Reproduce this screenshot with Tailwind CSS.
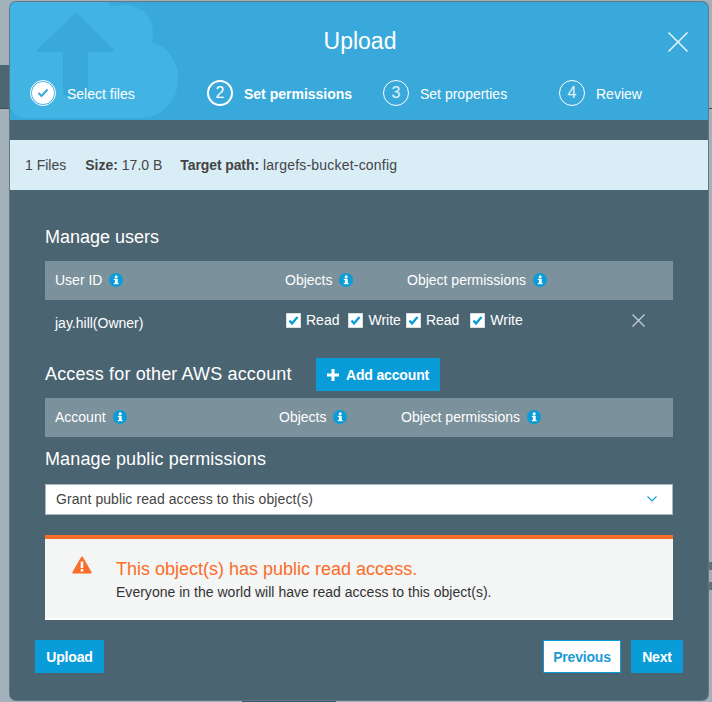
<!DOCTYPE html>
<html lang="en">
<head>
    <meta charset="UTF-8">
    <title>Upload</title>
    <script src="https://cdn.jsdelivr.net/npm/@tailwindcss/browser@4"></script>
</head>
<body class="bg-[#a3b2ba] font-['Liberation_Sans',sans-serif] overflow-hidden">
<div class="relative w-[712px] h-[702px] overflow-hidden pt-[2px]">
    <!-- Page behind the modal -->
    <div class="absolute left-0 top-[65px] w-[10px] h-[43px] bg-[#4d6673]"></div>
    <div class="absolute left-0 top-[108px] w-full h-px bg-[#3c4d57]"></div>
    <div class="absolute left-[708px] top-[562px] w-[4px] h-[8px] bg-[#5d6f7a]"></div>
    <div class="absolute left-[708px] top-[582px] w-[4px] h-[8px] bg-[#5d6f7a]"></div>
    <div class="absolute left-[242px] top-[700px] w-[94px] h-[2px] bg-[#2f5a70]"></div>

    <!-- Modal -->
    <div class="relative ml-[10px] w-[698px] h-[698px] bg-[#4b6472] rounded-md overflow-hidden shadow-[0_0_0_1px_#667680]">
        <!-- Header -->
        <div class="relative h-[118px] bg-[#39a9db] overflow-hidden">
            <svg class="absolute left-0 top-0" width="180" height="118" viewBox="0 0 180 118">
                <path d="M0 0H98Q100 5 104 4C124 -1 148 10 142 40C160 46 169 62 168 78C168 100 150 116 130 116H16C6 116 0 110 0 100Z" fill="#42b4e3"/>
                <path d="M67 11Q66 10 65 11L28 47Q25 50 29 50H53V90Q53 94 57 94H74Q78 94 78 90V50H102Q106 50 103 47Z" fill="#39a9db"/>
            </svg>
            <h1 class="absolute top-[25px] left-0 w-full pl-[2px] text-center text-[23px] leading-[28px] text-white">Upload</h1>
            <svg class="absolute left-[658px] top-[30px]" width="20" height="20" viewBox="0 0 20 20" fill="none" stroke="#e8f5fb" stroke-width="1.5"><path d="M0.5 0.5L19.5 19.5M19.5 0.5L0.5 19.5"/></svg>

            <div class="absolute left-[20px] top-[78px] flex">
                <div class="w-[177px] flex items-center gap-[11px]">
                    <div class="w-[26px] h-[26px] rounded-full border border-white flex items-center justify-center">
                        <div class="w-[22px] h-[22px] rounded-full bg-white flex items-center justify-center">
                            <svg width="12" height="10" viewBox="0 0 12 10" fill="none" stroke="#39a9db" stroke-width="2"><path d="M1.5 5L4.5 8L10.5 1.5"/></svg>
                        </div>
                    </div>
                    <span class="pt-[2px] text-sm text-white font-medium">Select files</span>
                </div>
                <div class="w-[176px] flex items-center gap-[11px]">
                    <div class="w-[26px] h-[26px] rounded-full border-2 border-white flex items-center justify-center text-white text-base">2</div>
                    <span class="pt-[2px] text-sm text-white font-bold">Set permissions</span>
                </div>
                <div class="w-[176px] flex items-center gap-[11px]">
                    <div class="w-[26px] h-[26px] rounded-full border border-white flex items-center justify-center text-[#e3f3fa] text-base">3</div>
                    <span class="pt-[2px] text-sm text-white">Set properties</span>
                </div>
                <div class="flex items-center gap-[11px]">
                    <div class="w-[26px] h-[26px] rounded-full border border-white flex items-center justify-center text-[#e3f3fa] text-base">4</div>
                    <span class="pt-[2px] text-sm text-white">Review</span>
                </div>
            </div>
        </div>

        <!-- Info bar -->
        <div class="mt-[20px] h-[50px] bg-[#d9edf7] flex items-center pl-[15px] text-sm text-[#444]">
            <span class="mr-[19px]">1 Files</span>
            <span class="mr-[18px]"><b>Size:</b> 17.0 B</span>
            <span class="tracking-[0.2px]"><b class="tracking-[-0.1px]">Target path:</b> largefs-bucket-config</span>
        </div>

        <div class="pl-[35px] pr-[35px]">
            <!-- Manage users -->
            <h2 class="mt-[36px] text-[18px] leading-[22px] text-white">Manage users</h2>
            <div class="mt-[13px] h-[39px] pb-[2px] bg-[#7b919c] flex items-center text-sm text-white">
                <div class="w-[240px] pl-[10px] flex items-center gap-[7px]">User ID <svg class="w-[14px] h-[14px]" viewBox="0 0 14 14"><circle cx="7" cy="7" r="7" fill="#0a9cd8"/><rect x="5.9" y="5.8" width="2.8" height="5.2" fill="#fff"/><rect x="4.8" y="5.8" width="2" height="1.2" fill="#fff"/><rect x="4.8" y="10" width="4.8" height="1.2" fill="#fff"/><circle cx="7.2" cy="3.7" r="1.5" fill="#fff"/></svg></div>
                <div class="w-[122px] flex items-center gap-[7px]">Objects <svg class="w-[14px] h-[14px]" viewBox="0 0 14 14"><circle cx="7" cy="7" r="7" fill="#0a9cd8"/><rect x="5.9" y="5.8" width="2.8" height="5.2" fill="#fff"/><rect x="4.8" y="5.8" width="2" height="1.2" fill="#fff"/><rect x="4.8" y="10" width="4.8" height="1.2" fill="#fff"/><circle cx="7.2" cy="3.7" r="1.5" fill="#fff"/></svg></div>
                <div class="flex items-center gap-[7px]">Object permissions <svg class="w-[14px] h-[14px]" viewBox="0 0 14 14"><circle cx="7" cy="7" r="7" fill="#0a9cd8"/><rect x="5.9" y="5.8" width="2.8" height="5.2" fill="#fff"/><rect x="4.8" y="5.8" width="2" height="1.2" fill="#fff"/><rect x="4.8" y="10" width="4.8" height="1.2" fill="#fff"/><circle cx="7.2" cy="3.7" r="1.5" fill="#fff"/></svg></div>
            </div>
            <div class="relative h-[45px] flex text-sm text-white">
                <div class="w-[241px] pl-[10px] pt-[13px]">jay.hill(Owner)</div>
                <div class="flex items-center h-[40px] gap-[5px]">
                    <svg width="15" height="15" viewBox="0 0 15 15"><rect width="15" height="15" fill="#fff" stroke="#b5bfc5"/><path d="M3.5 7.5L6 10.5L11.5 4" fill="none" stroke="#0a9cd8" stroke-width="2.4"/></svg>
                    <span class="mr-[4px]">Read</span>
                    <svg width="15" height="15" viewBox="0 0 15 15"><rect width="15" height="15" fill="#fff" stroke="#b5bfc5"/><path d="M3.5 7.5L6 10.5L11.5 4" fill="none" stroke="#0a9cd8" stroke-width="2.4"/></svg>
                    <span>Write</span>
                    <svg width="15" height="15" viewBox="0 0 15 15"><rect width="15" height="15" fill="#fff" stroke="#b5bfc5"/><path d="M3.5 7.5L6 10.5L11.5 4" fill="none" stroke="#0a9cd8" stroke-width="2.4"/></svg>
                    <span class="mr-[6px]">Read</span>
                    <svg width="15" height="15" viewBox="0 0 15 15"><rect width="15" height="15" fill="#fff" stroke="#b5bfc5"/><path d="M3.5 7.5L6 10.5L11.5 4" fill="none" stroke="#0a9cd8" stroke-width="2.4"/></svg>
                    <span>Write</span>
                </div>
                <svg class="absolute left-[587px] top-[14px]" width="13" height="13" viewBox="0 0 13 13" fill="none" stroke="#c3ced3" stroke-width="1.3"><path d="M0.5 0.5L12.5 12.5M12.5 0.5L0.5 12.5"/></svg>
            </div>

            <!-- Other accounts -->
            <div class="mt-[13px] h-[33px] flex items-center">
                <h2 class="w-[271px] text-[18px] tracking-[0.15px] whitespace-nowrap text-white">Access for other AWS account</h2>
                <button class="w-[124px] h-[33px] bg-[#0a9cd8] text-white text-sm font-bold tracking-[-0.15px] flex items-center justify-center gap-[7px]">
                    <svg width="12" height="12" viewBox="0 0 12 12"><path d="M6 0V12M0 6H12" stroke="#fff" stroke-width="3"/></svg>
                    Add account
                </button>
            </div>
            <div class="mt-[7px] h-[39px] pb-[2px] bg-[#7b919c] flex items-center text-sm text-white">
                <div class="w-[234px] pl-[10px] flex items-center gap-[7px]">Account <svg class="w-[14px] h-[14px]" viewBox="0 0 14 14"><circle cx="7" cy="7" r="7" fill="#0a9cd8"/><rect x="5.9" y="5.8" width="2.8" height="5.2" fill="#fff"/><rect x="4.8" y="5.8" width="2" height="1.2" fill="#fff"/><rect x="4.8" y="10" width="4.8" height="1.2" fill="#fff"/><circle cx="7.2" cy="3.7" r="1.5" fill="#fff"/></svg></div>
                <div class="w-[122px] flex items-center gap-[7px]">Objects <svg class="w-[14px] h-[14px]" viewBox="0 0 14 14"><circle cx="7" cy="7" r="7" fill="#0a9cd8"/><rect x="5.9" y="5.8" width="2.8" height="5.2" fill="#fff"/><rect x="4.8" y="5.8" width="2" height="1.2" fill="#fff"/><rect x="4.8" y="10" width="4.8" height="1.2" fill="#fff"/><circle cx="7.2" cy="3.7" r="1.5" fill="#fff"/></svg></div>
                <div class="flex items-center gap-[7px]">Object permissions <svg class="w-[14px] h-[14px]" viewBox="0 0 14 14"><circle cx="7" cy="7" r="7" fill="#0a9cd8"/><rect x="5.9" y="5.8" width="2.8" height="5.2" fill="#fff"/><rect x="4.8" y="5.8" width="2" height="1.2" fill="#fff"/><rect x="4.8" y="10" width="4.8" height="1.2" fill="#fff"/><circle cx="7.2" cy="3.7" r="1.5" fill="#fff"/></svg></div>
            </div>

            <!-- Public permissions -->
            <h2 class="mt-[11px] text-[18px] tracking-[0.12px] leading-[22px] text-white">Manage public permissions</h2>
            <div class="mt-[14px] h-[31px] pb-[2px] bg-white border border-[#aab7bd] flex items-center justify-between pl-[10px] pr-[15px] text-sm tracking-[0.08px] text-[#444]">
                Grant public read access to this object(s)
                <svg width="10" height="6" viewBox="0 0 10 6" fill="none" stroke="#0a9cd8" stroke-width="1.1"><path d="M0.5 0.5L5 5L9.5 0.5"/></svg>
            </div>

            <!-- Alert -->
            <div class="mt-[20px] h-[85px] bg-[#f4f5f5] border-t-4 border-b-2 border-t-[#f96d29] border-b-white flex">
                <div class="w-[71px] pt-[17px] pl-[27px]">
                    <svg width="20" height="18" viewBox="0 0 20 18"><path d="M10 0.5Q10.6 0.5 11 1.2L19.6 16.2Q20 17.5 18.8 17.5H1.2Q0 17.5 0.4 16.2L9 1.2Q9.4 0.5 10 0.5Z" fill="#f96d29"/><rect x="8.7" y="5.5" width="2.6" height="6.5" fill="#fff"/><rect x="8.7" y="13" width="2.6" height="2.6" fill="#fff"/></svg>
                </div>
                <div>
                    <p class="mt-[19px] text-lg leading-[22px] text-[#f96d29]">This object(s) has public read access.</p>
                    <p class="mt-[3px] text-[14px] leading-[18px] text-[#333] tracking-[0.02px]">Everyone in the world will have read access to this object(s).</p>
                </div>
            </div>
        </div>

        <!-- Footer -->
        <div class="mt-[20px] px-[25px] flex justify-between">
            <button class="w-[69px] h-[33px] bg-[#0a9cd8] text-white text-sm font-bold tracking-[-0.15px]">Upload</button>
            <div class="flex gap-[10px]">
                <button class="w-[78px] h-[33px] bg-white border border-[#0a9cd8] text-[#1b9bd6] text-sm font-bold tracking-[-0.2px]">Previous</button>
                <button class="w-[52px] h-[33px] bg-[#0a9cd8] text-white text-sm font-bold tracking-[-0.15px]">Next</button>
            </div>
        </div>
    </div>
</div>
</body>
</html>
